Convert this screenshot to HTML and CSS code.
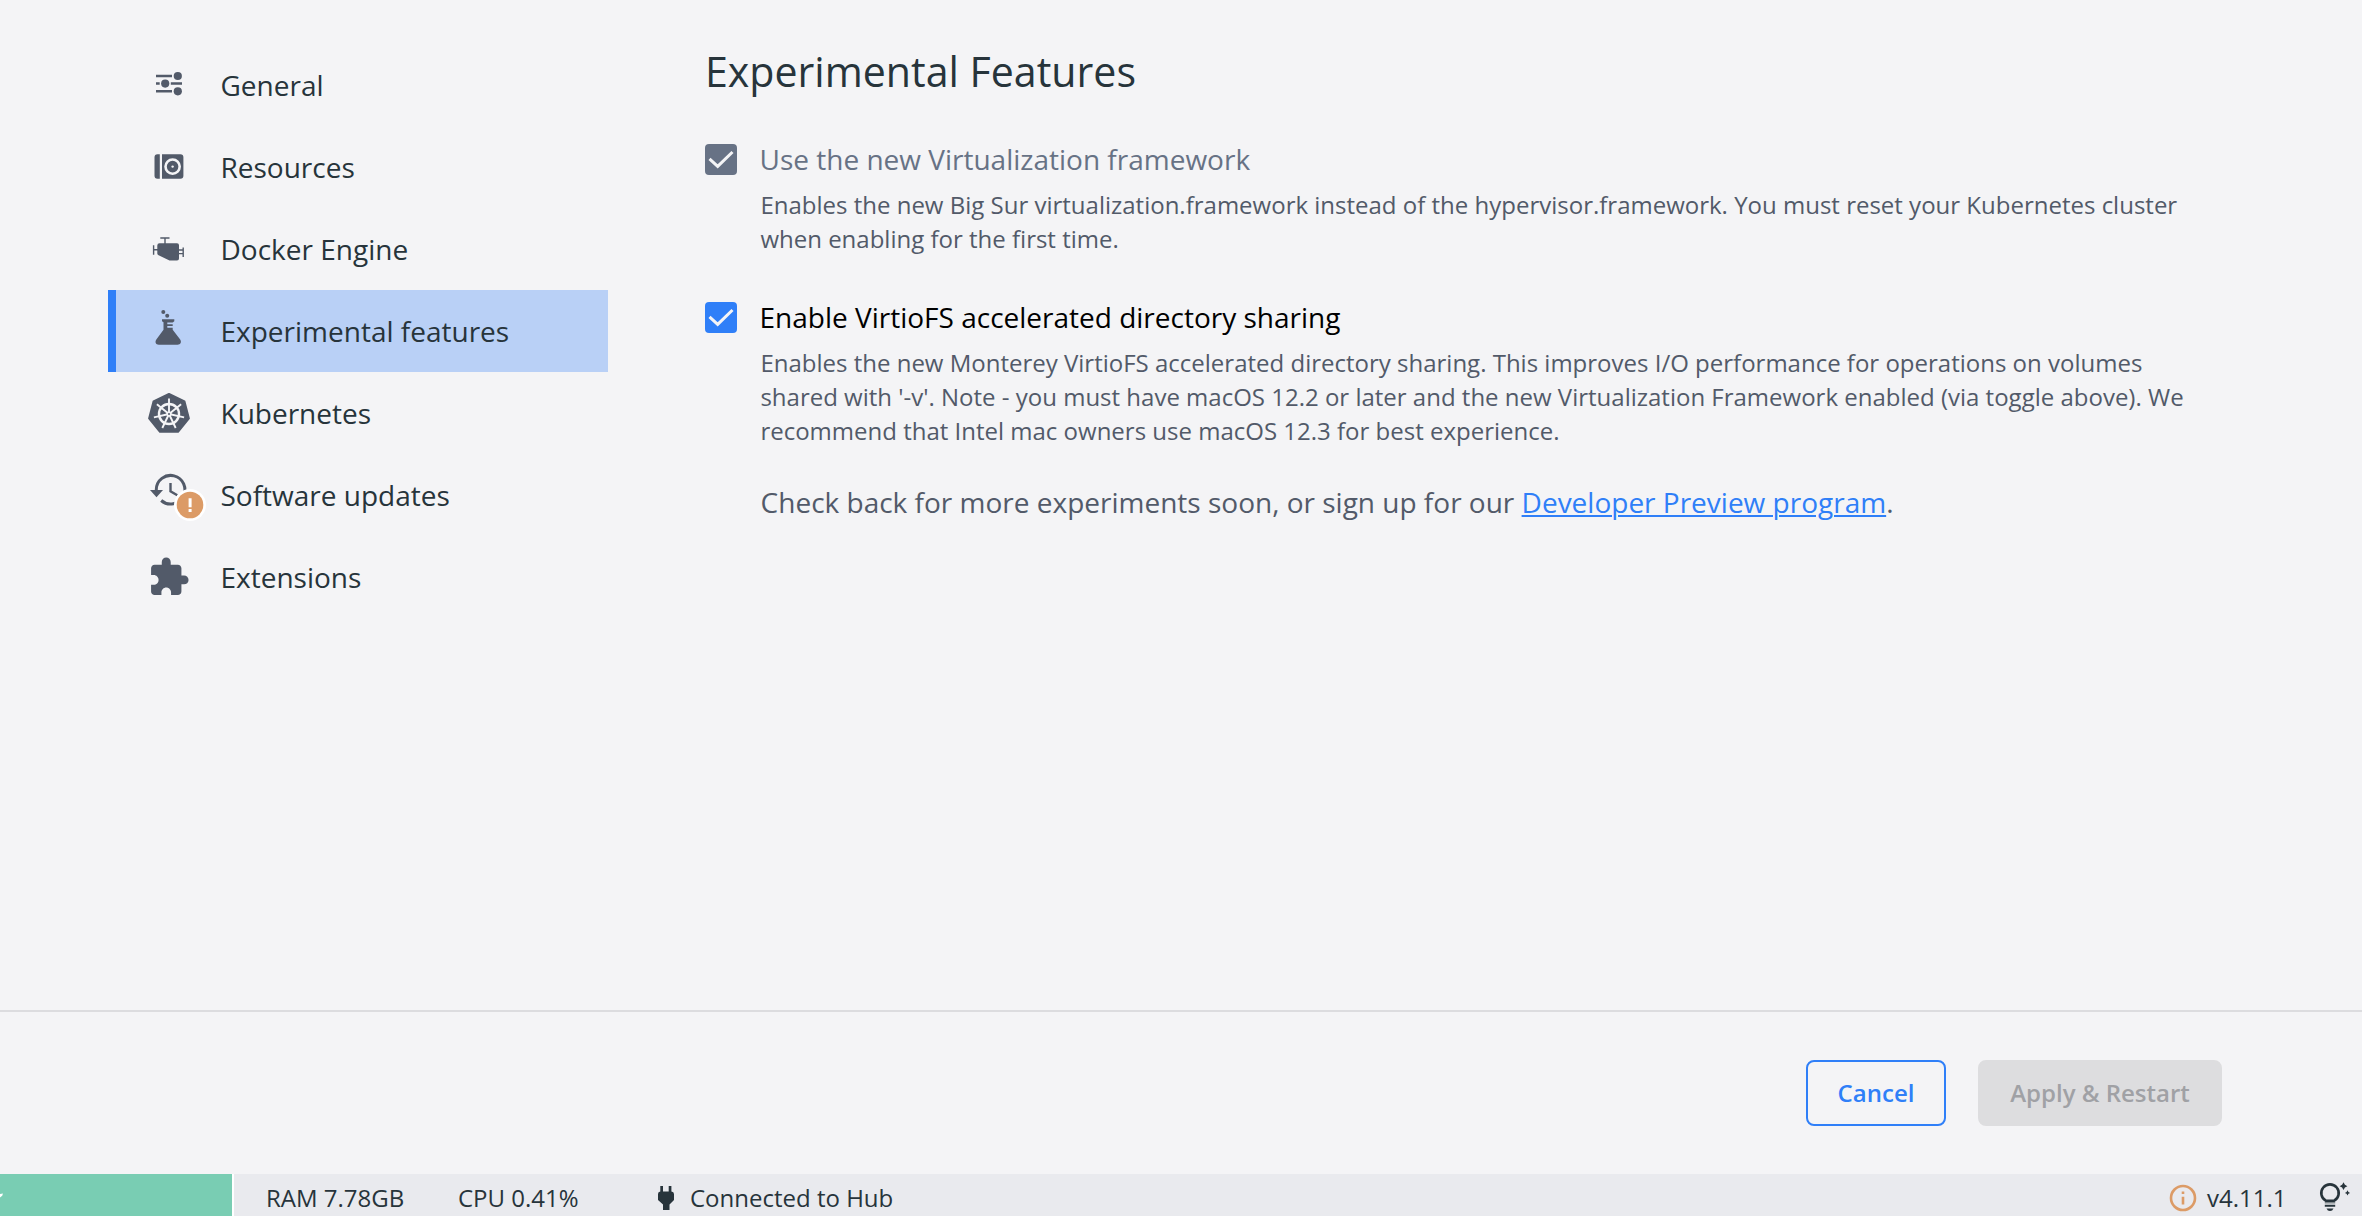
FILE: index.html
```html
<!DOCTYPE html>
<html lang="en">
<head>
<meta charset="utf-8">
<title>Experimental Features</title>
<link rel="stylesheet" href="styles.css">
</head>
<body>
<div class="app">
  <main class="settings">
    <nav class="sidebar">
      <a class="nav-item">
        <svg class="nav-icon" viewBox="136 44 72 82">
          <path class="line" stroke-width="2.5" d="M156 76H172M156 83.6H159.7M170.8 83.6H182M156 91.3H172"/>
          <circle cx="177.8" cy="76" r="4.1"/><circle cx="165.2" cy="83.6" r="4.1"/><circle cx="177.8" cy="91.3" r="4.1"/>
        </svg>
        <span>General</span>
      </a>
      <a class="nav-item">
        <svg class="nav-icon" viewBox="136 126 72 82">
          <path d="M159.8 154.2V178.7H157.5a3 3 0 0 1-3-3V157.2a3 3 0 0 1 3-3zM162 154.2H180.4a3 3 0 0 1 3 3V175.7a3 3 0 0 1-3 3H162z"/>
          <circle class="cut" cx="172.6" cy="166.6" r="7.1" stroke-width="2.6"/>
          <circle class="hole" cx="172.6" cy="166.6" r="1.2"/>
        </svg>
        <span>Resources</span>
      </a>
      <a class="nav-item">
        <svg class="nav-icon" viewBox="136 208 72 82">
          <path d="M159.5 243.2H177a2 2 0 0 1 2 2V258.5a2 2 0 0 1-2 2H169.5L158.6 255.3a2 2 0 0 1-1.3-2V245.4a2.2 2.2 0 0 1 2.2-2.2z"/>
          <path class="line" stroke-width="1.4" d="M160.3 238H169.5M165 238V244M153.6 245.3V254.7M153.6 249.8H158M178.5 250H183.4M178.5 253.6H183.4M183.2 247.5V257"/>
        </svg>
        <span>Docker Engine</span>
      </a>
      <a class="nav-item active">
        <svg class="nav-icon" viewBox="136 290 72 82">
          <circle cx="163.3" cy="312" r="2"/><circle cx="167.2" cy="315.7" r="2"/>
          <path d="M162 319.2H174.3V321.2L172.7 322.4H167.3V324.2H172.7V326H167.3V327.8H172.7V329.7L180 339.3C182 342 180.5 344.7 177.6 344.7H158.8C155.8 344.7 154.5 342 156.5 339.3L163.5 329.7V322.3L162 321.2z"/>
        </svg>
        <span>Experimental features</span>
      </a>
      <a class="nav-item">
        <svg class="nav-icon" viewBox="136 372 72 82">
          <path stroke="#525a69" stroke-width="2" stroke-linejoin="round" d="M169 394L184.5 401.5 188.9 418.4 178 431.8H160L149.1 418.4 153.5 401.5z"/>
          <g transform="translate(169 414)" stroke="#f4f4f6" fill="none">
            <circle r="10" stroke-width="2.4"/>
            <path stroke-width="1.9" d="M0 0V-15.5M0 0L12.1-9.7M0 0L15.1 3.4M0 0L6.7 14M0 0L-6.7 14M0 0L-15.1 3.4M0 0L-12.1-9.7"/>
            <circle r="2.6" fill="#f4f4f6" stroke="none"/><circle r="1" fill="#525a69" stroke="none"/>
          </g>
        </svg>
        <span>Kubernetes</span>
      </a>
      <a class="nav-item">
        <svg class="nav-icon" viewBox="136 454 72 82">
          <path class="line" stroke-width="3" d="M156.3 491V489.5A14.3 14.3 0 1 1 161.2 500.5"/>
          <path d="M150 489.9H163L156.5 497.3z"/>
          <path class="line" stroke-width="2.4" d="M170.5 483V491.3L177.3 495.2"/>
          <circle cx="190" cy="505" r="16" fill="#fff"/><circle cx="190" cy="505" r="13.3" fill="#dc9b66"/>
          <path fill="#fff" d="M188.6 498.2H191.6V507.2H188.6zM188.6 509H191.6V511.9H188.6z"/>
        </svg>
        <span>Software updates</span>
      </a>
      <a class="nav-item">
        <svg class="nav-icon" viewBox="136 536 72 82">
          <path transform="translate(147.5 555.8) scale(1.785)" d="M20.5 11H19V7c0-1.1-.9-2-2-2h-4V3.5C13 2.12 11.88 1 10.5 1S8 2.12 8 3.5V5H4c-1.1 0-1.99.9-1.99 2v3.8H3.5c1.49 0 2.7 1.21 2.7 2.7s-1.21 2.7-2.7 2.7H2V20c0 1.1.9 2 2 2h3.8v-1.5c0-1.49 1.21-2.7 2.7-2.7 1.49 0 2.7 1.21 2.7 2.7V22H17c1.1 0 2-.9 2-2v-4h1.5c1.38 0 2.5-1.12 2.5-2.5S21.88 11 20.5 11z"/>
        </svg>
        <span>Extensions</span>
      </a>
    </nav>
    <section class="content">
      <h1>Experimental Features</h1>
      <div class="feature">
        <label class="option disabled">
          <svg class="check" viewBox="0 0 32 31"><path d="M4.5 14.8L12.7 22.4 27.5 8"/></svg>
          <span>Use the new Virtualization framework</span>
        </label>
        <p class="desc">Enables the new Big Sur virtualization.framework instead of the hypervisor.framework. You must reset your Kubernetes cluster<br>when enabling for the first time.</p>
      </div>
      <div class="feature">
        <label class="option">
          <svg class="check" viewBox="0 0 32 31"><path d="M4.5 14.8L12.7 22.4 27.5 8"/></svg>
          <span>Enable VirtioFS accelerated directory sharing</span>
        </label>
        <p class="desc">Enables the new Monterey VirtioFS accelerated directory sharing. This improves I/O performance for operations on volumes<br>shared with '-v'. Note - you must have macOS 12.2 or later and the new Virtualization Framework enabled (via toggle above). We<br>recommend that Intel mac owners use macOS 12.3 for best experience.</p>
      </div>
      <p class="more">Check back for more experiments soon, or sign up for our <a class="link">Developer Preview program</a>.</p>
    </section>
  </main>
  <div class="actions">
    <button class="btn cancel">Cancel</button>
    <button class="btn apply" disabled>Apply &amp; Restart</button>
  </div>
  <footer class="status">
    <div class="engine"><svg viewBox="0 0 4 6"><path d="M0 1L3 .5 2.2 2.7 0 4.5z"/></svg></div>
    <span class="ram">RAM 7.78GB</span>
    <span class="cpu">CPU 0.41%</span>
    <svg class="plug" viewBox="0 0 16 24"><path d="M2.3 0H5V5.5H10.7V0H13.4V5.5Q16 5.7 16 8V14L11.5 18.5V24H5V18.5L0 14V8Q0 5.7 2.3 5.5z"/></svg>
    <span class="hub">Connected to Hub</span>
    <svg class="info" viewBox="0 0 28 28"><circle cx="14" cy="14" r="12" fill="none" stroke="#dc9b66" stroke-width="2.6"/><path d="M12.7 12.7H15.3V20.5H12.7zM12.7 7.4H15.3V10H12.7z"/></svg>
    <span class="version">v4.11.1</span>
    <svg class="bulb" viewBox="0 0 32 30">
      <path fill="none" stroke="#27343b" stroke-width="2.6" d="M6.8 18.7A8.7 8.7 0 1 1 15.2 18.7z"/>
      <path d="M5.8 19.5H16.2V21.5H5.8z" opacity=".55"/>
      <path d="M5.8 22.7H16.2V24.8H5.800zM7.5 26.5H14.5Q13.5 29 11 29T7.5 26.5z"/>
      <path d="M24.5 .3L25.9 2.8 28.4 4.2 25.9 5.6 24.5 8.1 23.1 5.6 20.6 4.2 23.1 2.8zM28.5 8.3L29.4 10 31.1 10.9 29.4 11.8 28.5 13.5 27.6 11.8 25.9 10.9 27.6 10z"/>
    </svg>
  </footer>
</div>
</body>
</html>
```
FILE: styles.css
```css
* { box-sizing: border-box; }

body {
  margin: 0;
  background: #f4f4f6;
  color: #27343b;
  font: 28px/38px "Open Sans", sans-serif;
}

h1, p { margin: 0; }

.app {
  height: 1216px;
  display: flex;
  flex-direction: column;
  overflow: hidden;
}

.settings {
  flex: 1;
  display: flex;
  padding: 44px 0 0 108px;
}

.sidebar { width: 500px; }

.nav-item {
  display: flex;
  align-items: center;
  gap: 12.5px;
  height: 82px;
  padding-left: 20px;
  border-left: 8px solid transparent;
}

.nav-item.active {
  background: #b9d0f6;
  border-color: #2f7ff8;
}

.nav-icon {
  width: 72px;
  height: 82px;
  fill: #525a69;
}

.nav-icon .line { fill: none; stroke: #525a69; }
.nav-icon .cut { fill: none; stroke: #f4f4f6; }
.nav-icon .hole { fill: #f4f4f6; }

.content { margin-left: 97px; }

h1 {
  height: 94px;
  font-size: 41.1px;
  font-weight: 400;
  line-height: 54px;
}

.feature { margin-bottom: 40px; }

.option {
  display: flex;
  align-items: center;
  gap: 22.5px;
  height: 42px;
  margin-bottom: 8px;
  color: #000;
}

.option.disabled { color: #677285; }

.check {
  width: 32px;
  height: 31px;
  border-radius: 4px;
  background: #2f7ff8;
  fill: none;
  stroke: #f4f4f6;
  stroke-width: 3;
}

.disabled .check { background: #677285; }

.desc {
  padding-left: 55.4px;
  color: #525a69;
  font-size: 24px;
  line-height: 34px;
}

.more {
  margin-top: -5px;
  padding-left: 55.6px;
  color: #525a69;
}

.link {
  color: #2f7ff8;
  text-decoration: underline;
  text-decoration-thickness: 2px;
  text-underline-offset: 2px;
}

.actions {
  display: flex;
  justify-content: flex-end;
  gap: 32px;
  height: 164px;
  padding: 48px 140px 0 0;
  border-top: 2px solid #dcdcdf;
}

.btn {
  height: 66px;
  border: 2px solid #2f7ff8;
  border-radius: 8px;
  padding: 0;
  background: transparent;
  color: #2f7ff8;
  font: 600 24px/34px "Open Sans", sans-serif;
}

.cancel { width: 140px; }

.apply {
  width: 244px;
  border-color: #dddddf;
  background: #dddddf;
  color: #a0a1a5;
}

.status {
  display: flex;
  align-items: flex-start;
  height: 42px;
  background: #e9eaee;
  font-size: 24px;
  line-height: 37px;
}

.status span { margin-top: 5px; }

.engine {
  width: 234px;
  height: 42px;
  padding-top: 19px;
  border-right: 2px solid #fff;
  background: #79cdb3;
}

.engine svg {
  display: block;
  width: 4px;
  height: 6px;
  fill: #fff;
}

.ram { width: 192px; margin-left: 32px; }
.cpu { width: 200px; }
.plug { width: 16px; height: 24px; margin-top: 12px; fill: #27343b; }
.hub { margin-left: 16px; }
.info { width: 28px; height: 28px; margin: 10px 10px 0 auto; fill: #dc9b66; }
.version { width: 112px; }
.bulb { width: 32px; height: 30px; margin: 8px 11px 0 0; fill: #27343b; }
```
